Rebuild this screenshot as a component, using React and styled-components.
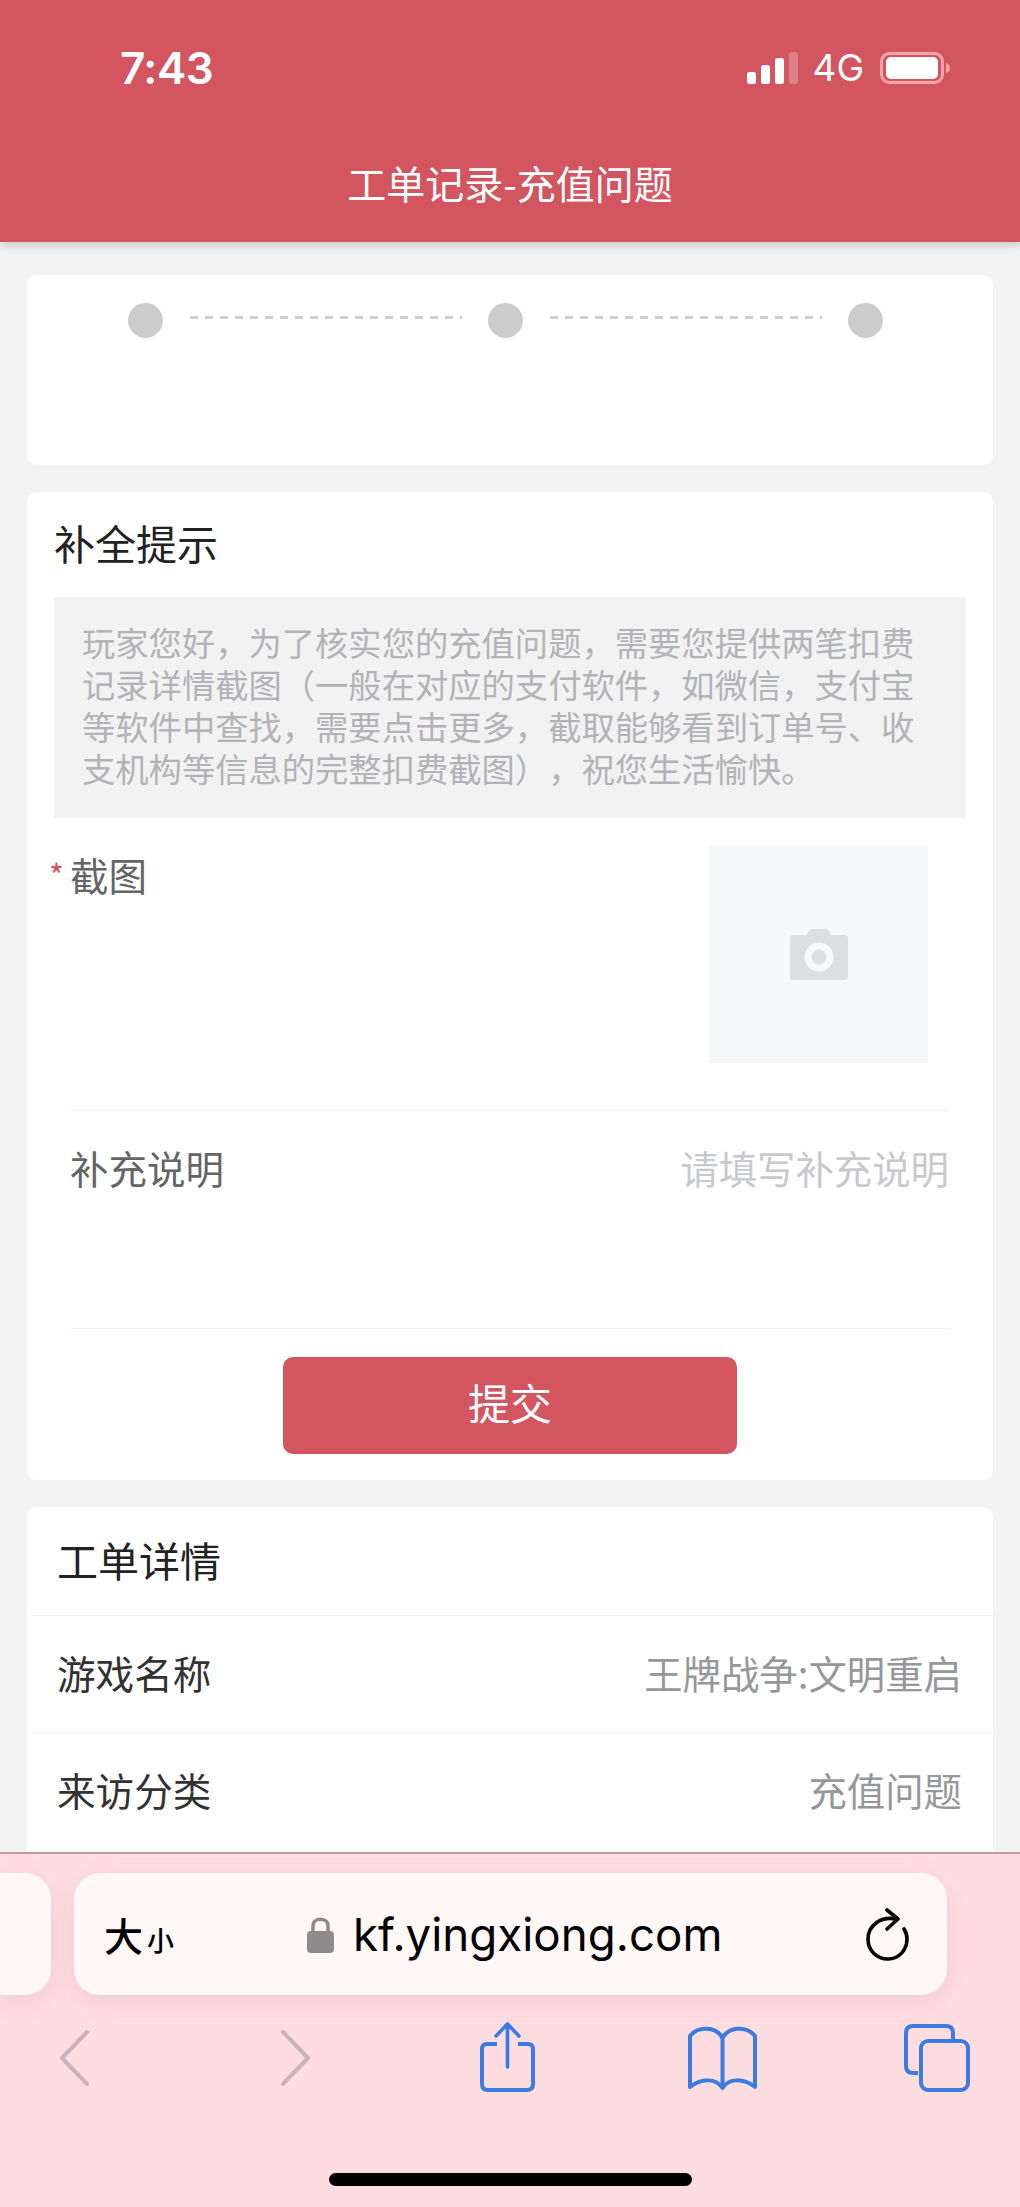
import React from "react";
import styled, { createGlobalStyle } from "styled-components";

const CJK = `"Noto Sans CJK SC", "Noto Sans", sans-serif`;
const RED = "#d25560";

const GlobalStyle = createGlobalStyle`
  html, body { margin: 0; padding: 0; }
  body { font-family: ${CJK}; background: #f3f3f3; text-spacing-trim: space-all; }
  * { box-sizing: border-box; }
`;

const App = () => {
  return (
    <Page>
      <GlobalStyle />
      <Header>
        <StatusBar>
          <Time>7:43</Time>
          <StatusIcons>
            <svg width="52" height="32" viewBox="0 0 52 32">
              <rect x="0" y="20" width="9" height="12" rx="2.5" fill="#fff" />
              <rect x="14" y="13" width="9" height="19" rx="2.5" fill="#fff" />
              <rect x="28" y="6" width="9" height="26" rx="2.5" fill="#fff" />
              <rect x="42" y="0" width="9" height="32" rx="2.5" fill="#fff" opacity="0.25" />
            </svg>
            <Network>4G</Network>
            <svg width="71" height="32" viewBox="0 0 71 32">
              <rect x="1.5" y="1.5" width="61" height="29" rx="8" fill="none" stroke="#f3a5ab" strokeWidth="3" />
              <rect x="6" y="5" width="52" height="22" rx="5" fill="#fff" />
              <path d="M66 11 C69 12 70 14 70 16 C70 18 69 20 66 21 Z" fill="#f3a5ab" />
            </svg>
          </StatusIcons>
        </StatusBar>
        <PageTitle>工单记录-充值问题</PageTitle>
      </Header>

      <Main>
        <StepCard>
          <StepDot />
          <StepLine />
          <StepDot />
          <StepLine />
          <StepDot />
        </StepCard>

        <FormCard>
          <CardTitle>补全提示</CardTitle>
          <Notice>
            玩家您好，为了核实您的充值问题，需要您提供两笔扣费记录详情截图（一般在对应的支付软件，如微信，支付宝等软件中查找，需要点击更多，截取能够看到订单号、收支机构等信息的完整扣费截图），祝您生活愉快。
          </Notice>
          <UploadField>
            <RequiredLabel>截图</RequiredLabel>
            <Uploader>
              <svg width="58" height="51" viewBox="0 0 58 51">
                <path
                  d="M17 6 L19 2 Q20 0 22 0 L36 0 Q38 0 39 2 L41 6 L55 6 Q58 6 58 9 L58 48 Q58 51 55 51 L3 51 Q0 51 0 48 L0 9 Q0 6 3 6 Z"
                  fill="#dcdee0"
                />
                <circle cx="29" cy="28" r="14.5" fill="#f7f8fa" />
                <circle cx="29" cy="28" r="7.5" fill="#dcdee0" />
              </svg>
            </Uploader>
          </UploadField>
          <TextField>
            <FieldLabel>补充说明</FieldLabel>
            <Placeholder>请填写补充说明</Placeholder>
          </TextField>
          <SubmitButton>提交</SubmitButton>
        </FormCard>

        <DetailCard>
          <DetailTitle>工单详情</DetailTitle>
          <DetailRow>
            <DetailLabel>游戏名称</DetailLabel>
            <DetailValue>王牌战争:文明重启</DetailValue>
          </DetailRow>
          <DetailRow>
            <DetailLabel>来访分类</DetailLabel>
            <DetailValue>充值问题</DetailValue>
          </DetailRow>
        </DetailCard>
      </Main>

      <Toolbar>
        <TabRow>
          <PrevTab />
          <UrlBar>
            <TextSize>
              大<small>小</small>
            </TextSize>
            <Address>
              <svg width="27" height="37" viewBox="0 0 27 37">
                <path d="M6 16 V10 C6 1 21 1 21 10 V16" fill="none" stroke="#8e8b8c" strokeWidth="3.5" />
                <rect x="0" y="15" width="27" height="22" rx="4" fill="#8e8b8c" />
              </svg>
              <Domain>kf.yingxiong.com</Domain>
            </Address>
            <ReloadIcon width="43" height="53" viewBox="0 0 43 53">
              <path
                d="M30 11 C14 8 2 18 2 31 C2 43 11 51 22 51 C33 51 41 42 41 31 C41 27 40 24 38 21"
                fill="none"
                stroke="#000"
                strokeWidth="3.6"
                strokeLinecap="round"
              />
              <path d="M21 2 L32 11 L21 21" fill="none" stroke="#000" strokeWidth="3.6" strokeLinecap="round" strokeLinejoin="round" />
            </ReloadIcon>
          </UrlBar>
        </TabRow>
        <NavRow>
          <NavIcon $gap={59} width="30" height="70" viewBox="0 0 30 70">
            <path d="M28 10 L3 36 L28 62" fill="none" stroke="#c9b3b6" strokeWidth="4" strokeLinecap="round" strokeLinejoin="round" />
          </NavIcon>
          <NavIcon $gap={192} width="30" height="70" viewBox="0 0 30 70">
            <path d="M2 10 L27 36 L2 62" fill="none" stroke="#c9b3b6" strokeWidth="4" strokeLinecap="round" strokeLinejoin="round" />
          </NavIcon>
          <NavIcon $gap={169} width="55" height="70" viewBox="0 0 55 70">
            <path d="M17 22 H7 Q2 22 2 27 V62 Q2 68 8 68 H47 Q53 68 53 62 V27 Q53 22 48 22 H38" fill="none" stroke="#3d7be4" strokeWidth="4" />
            <path d="M27.5 45 V3 M16 14 L27.5 2 L39 14" fill="none" stroke="#3d7be4" strokeWidth="3.6" strokeLinecap="round" strokeLinejoin="round" />
          </NavIcon>
          <NavIcon $gap={153} width="69" height="70" viewBox="0 0 69 70">
            <path
              d="M34.5 66 C28 56 14 56 2 65 V14 C10 4 28 4 34.5 16 C41 4 59 4 67 14 V65 C55 56 41 56 34.5 66 Z M34.5 16 V66"
              fill="none"
              stroke="#3d7be4"
              strokeWidth="4"
              strokeLinejoin="round"
            />
          </NavIcon>
          <NavIcon $gap={147} width="66" height="70" viewBox="0 0 66 70">
            <path d="M14 51 H9 Q2 51 2 44 V11 Q2 4 9 4 H42 Q49 4 49 11 V18" fill="none" stroke="#3d7be4" strokeWidth="4" />
            <rect x="17" y="19" width="47" height="49" rx="7" fill="none" stroke="#3d7be4" strokeWidth="4" />
          </NavIcon>
        </NavRow>
        <HomeIndicator />
      </Toolbar>
    </Page>
  );
};

export default App;

const Page = styled.div`
  width: 1020px;
  height: 2207px;
  display: flex;
  flex-direction: column;
  overflow: hidden;
  background: #f3f3f3;
`;

const Header = styled.header`
  height: 242px;
  flex-shrink: 0;
  background: ${RED};
  box-shadow: 0 4px 8px rgba(0, 0, 0, 0.16);
  position: relative;
  z-index: 1;
`;

const StatusBar = styled.div`
  height: 136px;
  display: flex;
  align-items: center;
  justify-content: space-between;
  padding: 0 69px 0 120px;
  color: #fff;
`;

const Time = styled.span`
  font-family: Inter, "Liberation Sans", sans-serif;
  font-size: 44px;
  font-weight: 600;
  letter-spacing: -0.5px;
`;

const StatusIcons = styled.div`
  display: flex;
  align-items: center;
`;

const Network = styled.span`
  font-family: Inter, "Liberation Sans", sans-serif;
  font-size: 37px;
  font-weight: 400;
  margin: 0 16px 0 13px;
  line-height: 32px;
`;

const PageTitle = styled.h1`
  margin: 0;
  height: 98px;
  line-height: 92px;
  text-align: center;
  font-size: 39px;
  font-weight: 400;
  color: #fff;
`;

const Main = styled.main`
  flex: 1;
  min-height: 0;
  overflow: hidden;
  padding: 33px 27px 0;
  display: flex;
  flex-direction: column;
  gap: 27px;
`;

const Card = styled.section`
  background: #fff;
  border-radius: 10px;
  flex-shrink: 0;
`;

const StepCard = styled(Card)`
  height: 190px;
  display: flex;
  align-items: flex-start;
  padding: 28px 0 0 101px;
`;

const StepDot = styled.span`
  width: 35px;
  height: 35px;
  border-radius: 50%;
  background: #cccccc;
`;

const StepLine = styled.span`
  width: 272px;
  height: 3px;
  margin: 13px 26px 0 27px;
  background: repeating-linear-gradient(90deg, #cfcfcf 0 8px, transparent 8px 15px);
`;

const FormCard = styled(Card)`
  height: 988px;
  padding: 0 27px;
  display: flex;
  flex-direction: column;
`;

const CardTitle = styled.h2`
  margin: 0;
  height: 105px;
  line-height: 100px;
  font-size: 41px;
  font-weight: 400;
  color: #222;
`;

const Notice = styled.p`
  margin: 0;
  height: 221px;
  padding: 24px 26px 0 28px;
  background: #f2f2f2;
  font-size: 33.3px;
  line-height: 42px;
  color: #b2b3b6;
`;

const UploadField = styled.div`
  margin: 0 17px 0 16px;
  padding: 27px 21px 47px 0;
  display: flex;
  justify-content: space-between;
  border-bottom: 1px solid #efefef;
`;

const FieldLabel = styled.label`
  font-size: 38.5px;
  line-height: 52px;
  color: #646566;
`;

const RequiredLabel = styled(FieldLabel)`
  position: relative;
  margin-top: 3px;

  &::before {
    content: "*";
    position: absolute;
    left: -21px;
    top: 0;
    font-size: 32px;
    color: ${RED};
  }
`;

const Uploader = styled.div`
  width: 219px;
  height: 218px;
  background: #f7f8fa;
  display: flex;
  align-items: center;
  justify-content: center;
`;

const TextField = styled.div`
  height: 218px;
  margin: 0 15px 0 16px;
  padding: 30px 2px 0 0;
  display: flex;
  align-items: flex-start;
  justify-content: space-between;
  border-bottom: 1px solid #efefef;
`;

const Placeholder = styled.span`
  font-size: 38.4px;
  line-height: 52px;
  color: #c8c9cc;
`;

const SubmitButton = styled.button`
  width: 454px;
  height: 97px;
  margin: 28px auto 0;
  padding: 0 0 8px;
  border: none;
  border-radius: 10px;
  background: ${RED};
  color: #fff;
  font-family: ${CJK};
  font-size: 42px;
`;

const DetailCard = styled(Card)`
  height: 500px;
`;

const DetailTitle = styled.h2`
  margin: 0;
  height: 108px;
  padding-left: 30px;
  line-height: 104px;
  font-size: 41px;
  font-weight: 400;
  color: #222;
`;

const DetailRow = styled.div`
  height: 117px;
  margin-left: 3px;
  padding: 0 31px 4px 27px;
  display: flex;
  align-items: center;
  justify-content: space-between;
  border-top: 1px solid #efefef;
`;

const DetailLabel = styled.span`
  font-size: 38.6px;
  color: #323233;
`;

const DetailValue = styled.span`
  font-size: 38.4px;
  color: #969799;
`;

const Toolbar = styled.footer`
  height: 355px;
  flex-shrink: 0;
  background: #fedde0;
  border-top: 2px solid #c39a9e;
  position: relative;
  z-index: 1;
`;

const TabRow = styled.div`
  padding-top: 19px;
  display: flex;
  gap: 23px;
`;

const PrevTab = styled.div`
  width: 51px;
  height: 122px;
  background: #fff8f7;
  border-radius: 0 26px 26px 0;
  box-shadow: 0 6px 24px rgba(150, 80, 90, 0.12);
`;

const UrlBar = styled.div`
  width: 873px;
  height: 122px;
  padding: 0 38px 0 30px;
  display: flex;
  align-items: center;
  background: #fff8f7;
  border-radius: 26px;
  box-shadow: 0 6px 24px rgba(150, 80, 90, 0.12);
`;

const TextSize = styled.span`
  width: 71px;
  font-size: 39px;
  font-weight: 500;
  color: #000;
  white-space: nowrap;

  small {
    font-size: 27px;
    font-weight: 500;
    margin-left: 4px;
  }
`;

const Address = styled.div`
  margin-left: 132px;
  display: flex;
  align-items: center;
  gap: 19px;
`;

const Domain = styled.span`
  font-family: Inter, "Liberation Sans", sans-serif;
  font-size: 45.7px;
  color: #000;
  white-space: nowrap;
`;

const ReloadIcon = styled.svg`
  margin-left: auto;
  flex-shrink: 0;
`;

const NavRow = styled.nav`
  height: 70px;
  margin-top: 27px;
  display: flex;
  align-items: center;
`;

const NavIcon = styled.svg`
  flex-shrink: 0;
  margin-left: ${(props) => props.$gap}px;
`;

const HomeIndicator = styled.div`
  width: 363px;
  height: 13px;
  margin: 81px 0 0 329px;
  border-radius: 7px;
  background: #000;
`;
